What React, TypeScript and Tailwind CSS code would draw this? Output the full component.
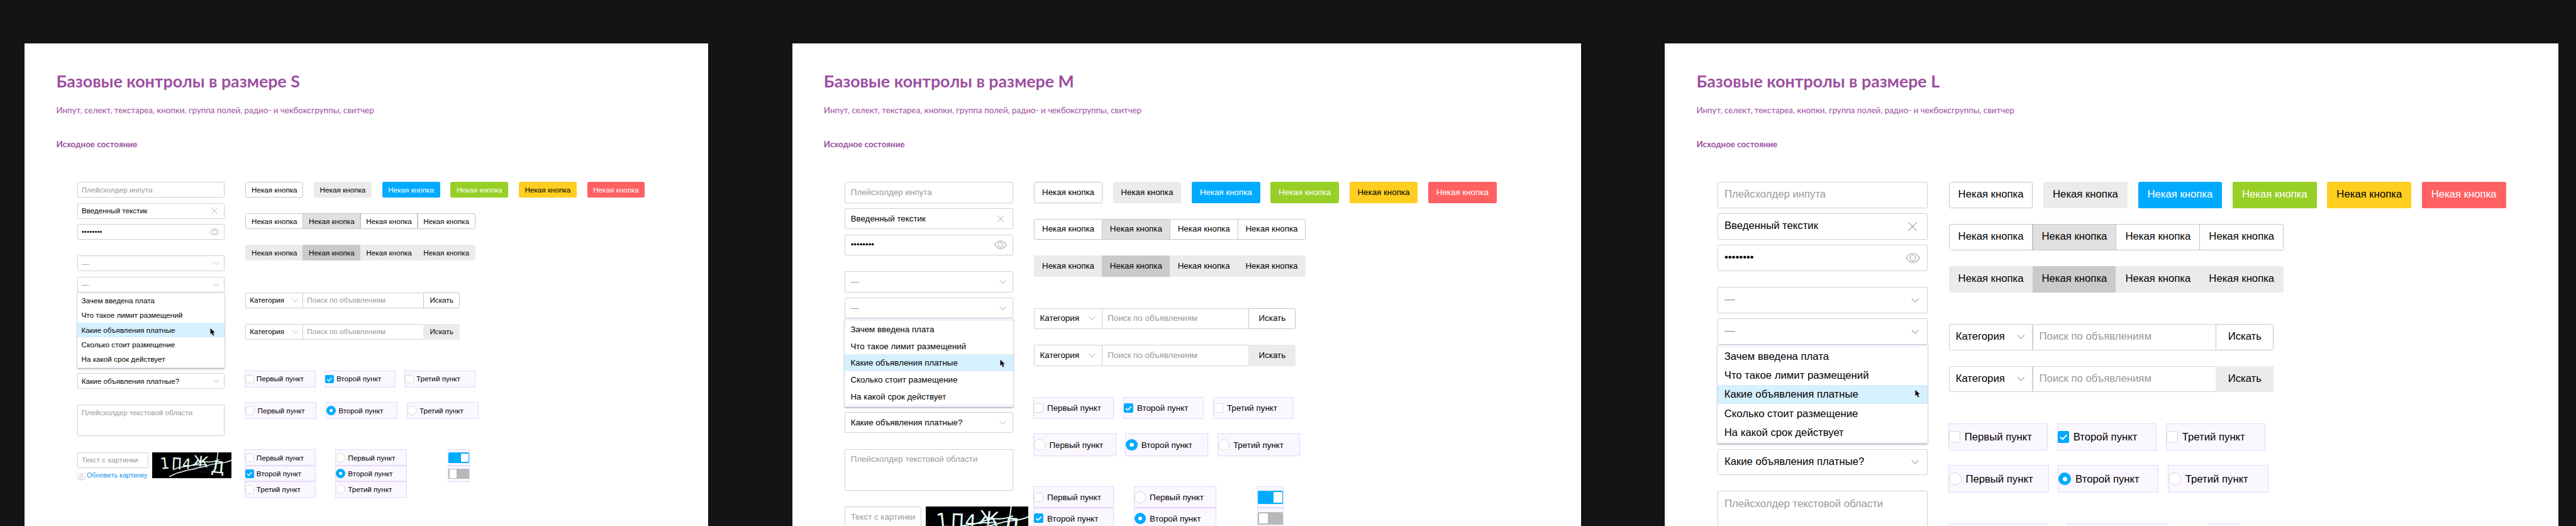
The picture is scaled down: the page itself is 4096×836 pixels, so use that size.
import React from 'react';
import { clsx } from 'clsx';

type SizeName = 'S' | 'M' | 'L';

const sizes = {
  S: {
    panel: 'w-[1300px]',
    font: 'text-[14px]',
    fields: 'w-[280px]',
    h: 'h-[30px]',
    fieldPad: 'pl-[7px]',
    lift: '',
    drop: '',
    cross: 'w-[12px] h-[12px] mr-[12px]',
    eye: 'w-[20px] h-[14px] mr-[8px]',
    chev: 'w-[11px] h-[6px] mr-[9px]',
    menuPad: 'py-[2px]',
    item: 'h-[28px] pl-[8px]',
    cursor: 'right-[17px]',
    area: 'h-[60px]',
    areaPad: 'h-[28px]',
    captchaInput: 'w-[135px]',
    captcha: 'w-[150px] h-[50px]',
    button: 'w-[110px]',
    select: 'w-[110px]',
    selectChev: 'w-[11px] h-[6px] mr-[8px]',
    search: 'w-[230px]',
    find: 'w-[70px]',
    check: 'w-[132px] gap-[5px]',
    radio: 'w-[134px] gap-[5px]',
    box: 'w-[16px] h-[16px]',
    circle: 'w-[18px] h-[18px]',
    dot: 'w-[6px] h-[6px]',
    toggleCell: 'w-[40px]',
    toggle: 'h-[20px]',
    knob: 'w-[14px] h-[16px]',
    listRows: 3,
  },
  M: {
    panel: 'w-[1500px]',
    font: 'text-[16px]',
    fields: 'w-[320px]',
    h: 'h-[40px]',
    fieldPad: 'pl-[10px]',
    lift: '',
    drop: 'pt-[2px]',
    cross: 'w-[14px] h-[14px] mr-[16px]',
    eye: 'w-[24px] h-[17px] mr-[11px]',
    chev: 'w-[13px] h-[7px] mr-[12px]',
    menuPad: 'py-[4px]',
    item: 'h-[32px] pl-[11px]',
    cursor: 'right-[14px]',
    area: 'h-[80px]',
    areaPad: 'h-[38px]',
    captchaInput: 'w-[146px]',
    captcha: 'w-[195px] h-[65px]',
    button: 'w-[130px]',
    select: 'w-[130px]',
    selectChev: 'w-[13px] h-[7px] mr-[12px]',
    search: 'w-[280px]',
    find: 'w-[90px]',
    check: 'w-[151px] gap-[7px]',
    radio: 'w-[155px] gap-[7px]',
    box: 'w-[18px] h-[18px]',
    circle: 'w-[22px] h-[22px]',
    dot: 'w-[8px] h-[8px]',
    toggleCell: 'w-[48px]',
    toggle: 'h-[24px]',
    knob: 'w-[17px] h-[20px]',
    listRows: 2,
  },
  L: {
    panel: 'w-[1700px]',
    font: 'text-[20px]',
    fields: 'w-[400px]',
    h: 'h-[50px]',
    fieldPad: 'pl-[12px]',
    lift: 'pb-[2px]',
    drop: 'pt-[2px]',
    cross: 'w-[17px] h-[17px] mr-[19px]',
    eye: 'w-[28px] h-[19px] mr-[13px]',
    chev: 'w-[15px] h-[8px] mr-[15px]',
    menuPad: 'py-[4px]',
    item: 'h-[36px] pl-[13px]',
    cursor: 'right-[13px]',
    area: 'h-[100px]',
    areaPad: 'h-[48px]',
    captchaInput: 'w-[190px]',
    captcha: 'w-[240px] h-[80px]',
    button: 'w-[160px]',
    select: 'w-[160px]',
    selectChev: 'w-[15px] h-[8px] mr-[14px]',
    search: 'w-[350px]',
    find: 'w-[110px]',
    check: 'w-[187px] gap-[8px]',
    radio: 'w-[189px] gap-[8px]',
    box: 'w-[22px] h-[22px]',
    circle: 'w-[24px] h-[24px]',
    dot: 'w-[8px] h-[8px]',
    toggleCell: 'w-[56px]',
    toggle: 'h-[28px]',
    knob: 'w-[20px] h-[24px]',
    listRows: 0,
  },
};

type Size = (typeof sizes)['S'];

const Cross = ({ className }: { className: string }) => (
  <svg viewBox="0 0 12 12" className={className} fill="none" stroke="#a3a3a3" strokeWidth="1">
    <path d="M0.3 0.3 11.7 11.7M11.7 0.3 0.3 11.7" />
  </svg>
);

const Eye = ({ className }: { className: string }) => (
  <svg viewBox="0 0 20 14" className={className} fill="none" stroke="#a3a3a3" strokeWidth="1">
    <path d="M0.6 7C3 3 6.2 0.7 10 0.7S17 3 19.4 7C17 11 13.8 13.3 10 13.3S3 11 0.6 7Z" />
    <circle cx="10" cy="7" r="3.9" />
  </svg>
);

const Chevron = ({ className }: { className: string }) => (
  <svg viewBox="0 0 11 6" className={className} fill="none" stroke="#a3a3a3" strokeWidth="1">
    <path d="M0.4 0.4 5.5 5.4 10.6 0.4" />
  </svg>
);

const Cursor = ({ className }: { className: string }) => (
  <svg viewBox="0 0 11 16" className={clsx('absolute top-[9px] w-[11px] h-[16px]', className)}>
    <path
      d="M0.3 0.3V13L3.2 10.3 5.3 15.2 8 14.1 5.9 9.4H10Z"
      fill="#000"
      stroke="#fff"
      strokeWidth="0.6"
    />
  </svg>
);

function Field({
  s,
  children,
  muted,
  icon,
}: {
  s: Size;
  children: React.ReactNode;
  muted?: boolean;
  icon?: React.ReactNode;
}) {
  return (
    <div
      className={clsx(
        'flex items-center justify-between rounded-[2px] border border-[#d0d0d0] bg-white',
        s.h,
        s.fieldPad,
        muted ? 'text-[#999]' : 'text-black',
      )}
    >
      <span className={s.lift}>{children}</span>
      {icon}
    </div>
  );
}

const options = [
  'Зачем введена плата',
  'Что такое лимит размещений',
  'Какие объявления платные',
  'Сколько стоит размещение',
  'На какой срок действует',
];

function Captcha({ s }: { s: Size }) {
  return (
    <svg viewBox="0 0 150 50" className={clsx('relative z-10 shrink-0 bg-black', s.captcha)}>
      <g fill="none" strokeWidth="0.7" strokeDasharray="3 1.5">
        <path d="M36 5C70 10 110 38 146 46" stroke="#1a1a9c" />
        <path d="M38 12C70 14 100 26 137 31" stroke="#1c6b1c" />
        <path d="M32 28C70 28 95 40 130 43" stroke="#6b1450" />
      </g>
      <g
        fill="#e8fffa"
        fontFamily="'DejaVu Sans', sans-serif"
        fontSize="30"
        textAnchor="middle"
      >
        <text transform="translate(25 31) rotate(-6) scale(0.9 1)">1</text>
        <text transform="translate(46 32) rotate(3) scale(0.85 1)">П</text>
        <text transform="translate(65 31) rotate(4) scale(0.95 1)" fontSize="27">4</text>
        <text transform="translate(91 27) rotate(6) scale(0.95 1)" fontSize="28">Ж</text>
        <text transform="translate(124 39) rotate(5) scale(1.05 1)" fontSize="31">Д</text>
      </g>
      <g fill="none" stroke="#e8fffa" strokeWidth="1.8" strokeLinecap="round">
        <path d="M40 33C50 27 62 28 73 25S90 25 103 23" />
        <path d="M33 46C40 42 48 38 57 37 66 33 78 33 88 29 98 28 107 24 118 22S142 20 150 15" />
        <path d="M73 25C84 22 92 17 104 18S120 16 127 14" />
        <path d="M125 0 123 16" />
      </g>
    </svg>
  );
}

const Refresh = () => (
  <span className="flex h-[14px] w-[14px] shrink-0 items-center justify-center rounded-full bg-white shadow-[0_1px_2px_rgba(0,0,0,0.4)]">
    <svg viewBox="0 0 10 10" className="h-[10px] w-[10px]" fill="none" stroke="#a3a3a3" strokeWidth="0.8">
      <path d="M3.8 1.8H7.6V6.6M6.4 5.6 7.6 6.8 8.8 5.6M6.2 8.2H2.4V3.4M1.2 4.4 2.4 3.2 3.6 4.4" />
    </svg>
  </span>
);

function Fields({ s, name }: { s: Size; name: SizeName }) {
  return (
    <div className={clsx('flex flex-col gap-[30px]', s.fields)}>
      <div className="flex flex-col gap-[10px]">
        <Field s={s} muted>Плейсхолдер инпута</Field>
        <Field s={s} icon={<Cross className={s.cross} />}>Введенный текстик</Field>
        <Field s={s} icon={<Eye className={s.eye} />}>••••••••</Field>
      </div>
      <div className="flex flex-col gap-[10px]">
        <Field s={s} muted icon={<Chevron className={s.chev} />}>—</Field>
        <div>
          <Field s={s} muted icon={<Chevron className={s.chev} />}>—</Field>
          <div
            className={clsx(
              'bg-[#f3f0fe] text-black shadow-[0_1px_3px_rgba(0,0,0,0.45)]',
              s.menuPad,
            )}
          >
            {options.map((o, i) => (
              <div
                key={o}
                className={clsx('relative flex items-center', s.item, i === 2 ? 'bg-[#d5f0ff]' : 'bg-white')}
              >
                <span className={s.drop}>{o}</span>
                {i === 2 && <Cursor className={s.cursor} />}
              </div>
            ))}
          </div>
        </div>
        <Field s={s} icon={<Chevron className={s.chev} />}>Какие объявления платные?</Field>
      </div>
      <div className={clsx('rounded-[2px] border border-[#d0d0d0] text-[#999]', s.area, s.fieldPad)}>
        <div className={clsx('flex items-center', s.areaPad)}>
          <span className={s.lift}>Плейсхолдер текстовой области</span>
        </div>
      </div>
      {name !== 'L' && (
        <div className="flex gap-[8px]">
          <div className={clsx('shrink-0', s.captchaInput)}>
            <Field s={s} muted>Текст с картинки</Field>
            {name === 'S' && (
              <div className="mt-[7px] flex items-center gap-[4px] text-[13px] text-[#1296e8]">
                <Refresh />
                Обновить картинку
              </div>
            )}
          </div>
          <Captcha s={s} />
        </div>
      )}
    </div>
  );
}

const buttonColors = [
  'border border-[#c6c6c6] bg-white text-black',
  'bg-[#ebebeb] text-black',
  'bg-[#00aaff] text-white',
  'bg-[#97cf26] text-white',
  'bg-[#ffce21] text-black',
  'bg-[#ff6163] text-white',
];

function Buttons({ s }: { s: Size }) {
  return (
    <div className="flex gap-[20px]">
      {buttonColors.map((c) => (
        <button key={c} className={clsx('rounded-[3px]', s.h, s.button, s.lift, c)}>Некая кнопка</button>
      ))}
    </div>
  );
}

function ButtonGroup({ s, filled }: { s: Size; filled?: boolean }) {
  return (
    <div className="flex">
      {[0, 1, 2, 3].map((i) => (
        <button
          key={i}
          className={clsx(
            'text-black',
            s.h,
            s.button,
            s.lift,
            i > 0 && '-ml-px',
            i === 0 && 'rounded-l-[3px]',
            i === 3 && 'rounded-r-[3px]',
            filled
              ? i === 1 ? 'bg-[#cacaca]' : 'bg-[#ebebeb]'
              : i === 1 ? 'border border-[#c6c6c6] bg-[#e0e0e0]' : 'border border-[#c6c6c6] bg-white',
          )}
        >
          Некая кнопка
        </button>
      ))}
    </div>
  );
}

function Search({ s, filled }: { s: Size; filled?: boolean }) {
  return (
    <div className="flex">
      <div className={clsx('flex items-center justify-between rounded-l-[2px] border border-[#d0d0d0]', s.h, s.select, s.fieldPad)}>
        <span className={s.lift}>Категория</span>
        <Chevron className={s.selectChev} />
      </div>
      <div className={clsx('-ml-px flex items-center border border-[#d0d0d0] text-[#999]', s.h, s.search, s.fieldPad)}>
        <span className={s.lift}>Поиск по объявлениям</span>
      </div>
      <button
        className={clsx(
          '-ml-px rounded-r-[3px] text-black',
          s.h,
          s.find,
          s.lift,
          filled ? 'bg-[#ebebeb]' : 'border border-[#c6c6c6] bg-white',
        )}
      >
        Искать
      </button>
    </div>
  );
}

const labels = ['Первый пункт', 'Второй пункт', 'Третий пункт'];

function Option({ s, kind, index }: { s: Size; kind: 'check' | 'radio'; index: number }) {
  const on = index === 1;
  return (
    <div
      className={clsx(
        'flex items-center bg-[#faf7ff] text-black outline outline-1 -outline-offset-1 outline-[#e4d8fb]',
        s.h,
        kind === 'check' ? s.check : s.radio,
      )}
    >
      <span
        className={clsx(
          'relative flex shrink-0 items-center justify-center',
          kind === 'check' ? ['rounded-[3px]', s.box] : ['rounded-full', s.circle],
          on ? 'bg-[#00aaff]' : 'border border-[#d9d9d9] bg-white',
        )}
      >
        {on && kind === 'check' && (
          <svg viewBox="0 0 16 16" className="h-full w-full" fill="none" stroke="#fff" strokeWidth="1.8">
            <path d="M3.4 8.4 6.8 11.4 12.6 5.4" />
          </svg>
        )}
        {on && kind === 'radio' && <span className={clsx('rounded-full bg-white', s.dot)} />}
      </span>
      <span className={s.drop}>{labels[index]}</span>
    </div>
  );
}

function Toggle({ s, on }: { s: Size; on?: boolean }) {
  return (
    <div className={clsx('flex items-center bg-[#faf7ff] outline outline-1 -outline-offset-1 outline-[#e4d8fb]', s.h, s.toggleCell)}>
      <div
        className={clsx(
          'relative flex w-full items-center rounded-[2px] px-[2px]',
          s.toggle,
          on ? 'justify-end bg-[#00aaff]' : 'justify-start bg-[#b8b8b8]',
        )}
      >
        <span className={clsx('rounded-[1px] bg-white', s.knob)} />
      </div>
    </div>
  );
}

const EmptyCell = ({ className }: { className: string }) => (
  <div className={clsx('h-[50px] border border-[#e4d8fb] bg-[#faf7ff]', className)} />
);

function Lists({ s }: { s: Size }) {
  if (s.listRows === 0) {
    return (
      <div className="flex">
        <EmptyCell className="mr-[40px] w-[187px]" />
        <EmptyCell className="mr-[80px] w-[189px]" />
        <EmptyCell className="w-[56px]" />
      </div>
    );
  }
  const rows = labels.slice(0, s.listRows);
  return (
    <div className="flex">
      <div className="mr-[40px]">
        {rows.map((l, i) => <Option key={l} s={s} kind="check" index={i} />)}
      </div>
      <div className="mr-[80px]">
        {rows.map((l, i) => <Option key={l} s={s} kind="radio" index={i} />)}
      </div>
      <div>
        <Toggle s={s} on />
        <Toggle s={s} />
      </div>
    </div>
  );
}

function Actions({ s }: { s: Size }) {
  return (
    <div className="flex flex-col gap-[60px]">
      <div className="flex flex-col gap-[30px]">
        <Buttons s={s} />
        <ButtonGroup s={s} />
        <ButtonGroup s={s} filled />
      </div>
      <div className="flex flex-col gap-[30px]">
        <Search s={s} />
        <Search s={s} filled />
      </div>
      <div className="flex flex-col gap-[30px]">
        {(['check', 'radio'] as const).map((kind) => (
          <div key={kind} className="flex gap-[20px]">
            {labels.map((l, i) => <Option key={l} s={s} kind={kind} index={i} />)}
          </div>
        ))}
      </div>
      <Lists s={s} />
    </div>
  );
}

function Panel({ name }: { name: SizeName }) {
  const s = sizes[name];
  return (
    <section className={clsx('h-[1100px] shrink-0 bg-white pt-[48px]', s.panel)}>
      <header className="pl-[60px] font-['Lato','Carlito',sans-serif] text-[#9c4fa0]">
        <h1 className="h-[70px] text-[32px] leading-[48px] font-bold">Базовые контролы в размере {name}</h1>
        <p className="h-[64px] text-[16px] leading-[20px]">
          Инпут, селект, текстареа, кнопки, группа полей, радио- и чекбоксгруппы, свитчер
        </p>
        <h2 className="h-[82px] text-[16px] leading-[20px] font-bold">Исходное состояние</h2>
      </header>
      <div
        className={clsx(
          "flex gap-[40px] pl-[100px] font-['Liberation_Sans',Arial,sans-serif] leading-[1.2] whitespace-nowrap",
          s.font,
        )}
      >
        <Fields s={s} name={name} />
        <Actions s={s} />
      </div>
    </section>
  );
}

export default function App() {
  return (
    <div className="h-[836px] w-[4096px] overflow-hidden bg-[#131416]">
      <main className="flex w-[4900px] gap-[160px] pt-[82px] pl-[47px] [zoom:0.83592]">
        <Panel name="S" />
        <Panel name="M" />
        <Panel name="L" />
      </main>
    </div>
  );
}
